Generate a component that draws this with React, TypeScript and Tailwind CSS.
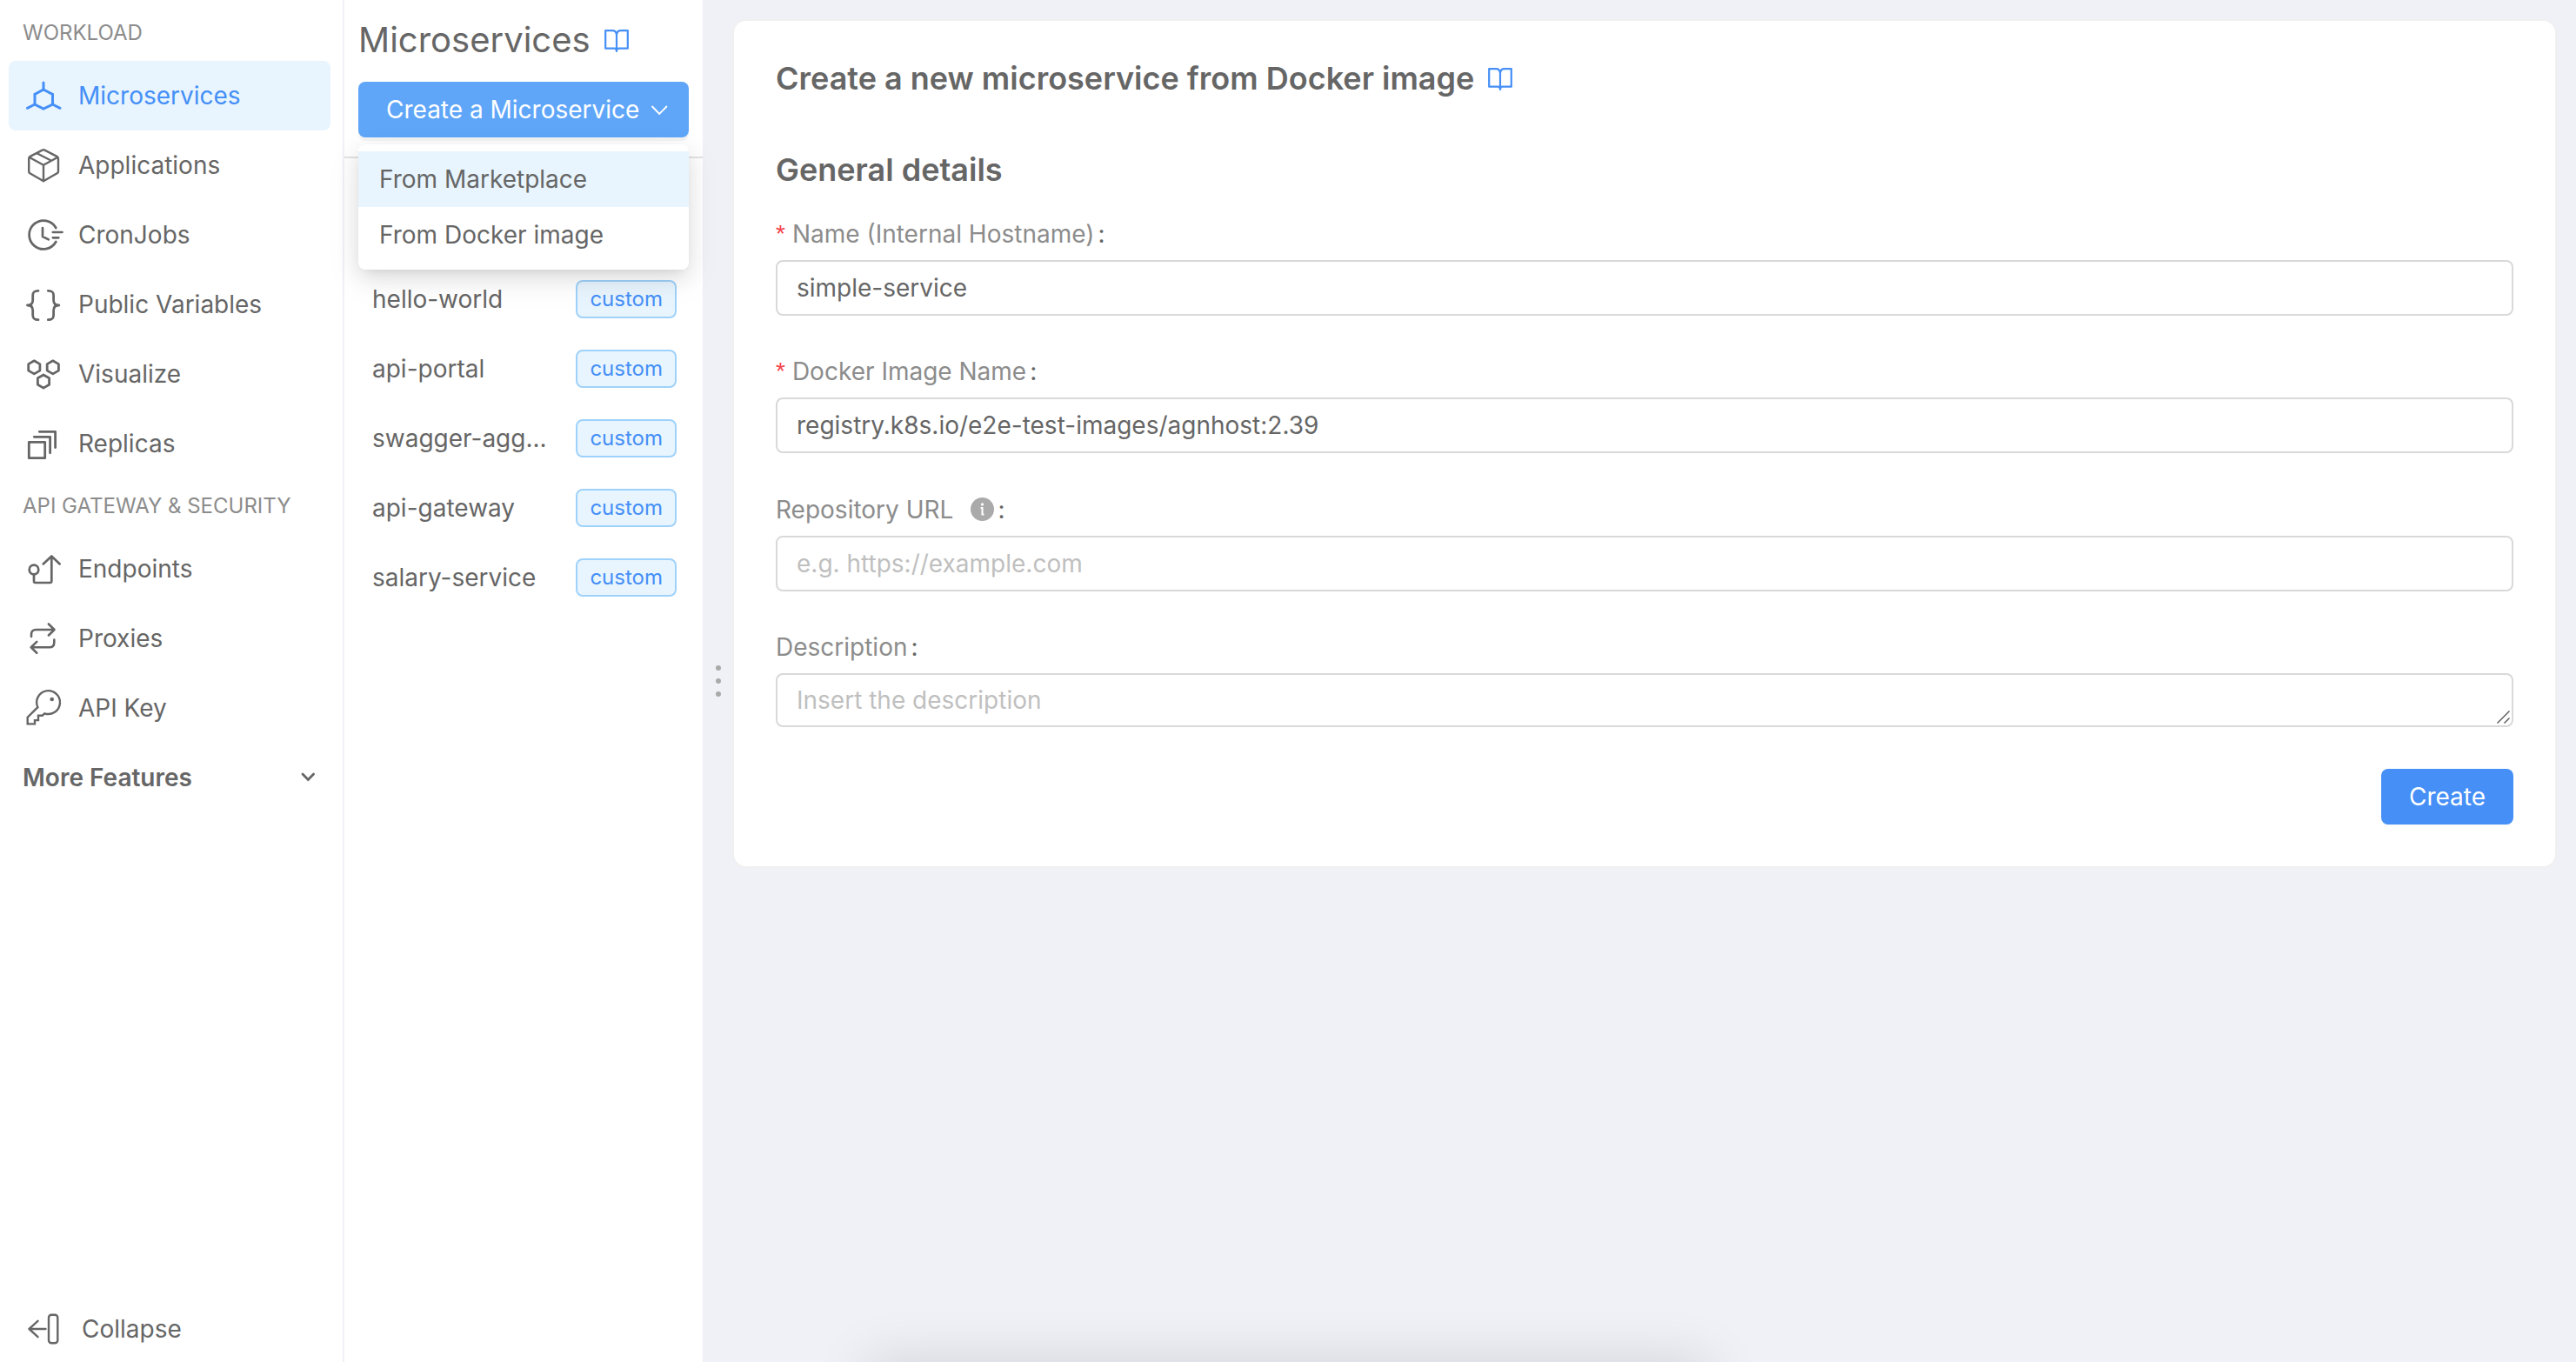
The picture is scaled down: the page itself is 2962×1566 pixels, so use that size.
import type { ReactNode } from "react";

function Icon({ children, width = 2.7 }: { children: ReactNode; width?: number }) {
  return (
    <svg
      className="size-12 shrink-0"
      viewBox="0 0 48 48"
      fill="none"
      stroke="currentColor"
      strokeWidth={width}
      strokeLinecap="round"
      strokeLinejoin="round"
      aria-hidden="true"
    >
      {children}
    </svg>
  );
}

const icons = {
  microservices: (
    <Icon width={3}>
      <path strokeLinejoin="miter" d="M24 17 34.5 22.5V34L24 39 14 34V22.5Z" />
      <path d="M24 9v8M14 34 5.5 38.3M34.5 34 43 38.3" />
    </Icon>
  ),
  applications: (
    <Icon width={2.4}>
      <path d="M22.6 6.6a3 3 0 0 1 2.8 0l14 7.3A3 3 0 0 1 41 16.500V31a2.500 2.500 0 0 1-1.400 2.300L24 42.200 8.400 33.300A2.500 2.500 0 0 1 7.200 31V16.500a3 3 0 0 1 1.500-2.600Z" />
      <path d="M8 15 24 23.700 40 15M24 23.700V42M17 10.500l15.500 8" />
    </Icon>
  ),
  cron: (
    <Icon>
      <path d="M38.300 16a16.400 16.400 0 1 0 0 16M23 16.200V26l6.800 3.400M34.800 21H45.500M34.800 27.300h6.500" />
    </Icon>
  ),
  variables: (
    <Icon width={2.8}>
      <path d="M18 8.300c-4.500 0-6.300 1.200-6.300 5.500v5.500c0 3.500-1.700 5.700-6.200 5.700 4.500 0 6.200 2.200 6.200 5.700v5.500c0 4.300 1.800 5.500 6.300 5.500" />
      <path d="M29.300 8.300c4.500 0 6.300 1.200 6.300 5.500v5.500c0 3.500 1.700 5.700 6.200 5.700-4.500 0-6.200 2.200-6.200 5.700v5.500c0 4.300-1.800 5.500-6.300 5.500" />
    </Icon>
  ),
  visualize: (
    <Icon width={2.8}>
      <path d="m13.300 8.800 6.600 3.800v7.500l-6.600 3.800-6.600-3.800v-7.500ZM34.800 8.800l6.600 3.800v7.500l-6.600 3.800-6.600-3.800v-7.500ZM24 25l6.600 3.800v7.500L24 40.100l-6.600-3.800v-7.500Z" />
    </Icon>
  ),
  replicas: (
    <Icon width={2.8}>
      <path d="M7.300 22.300h18.400v18.400H7.300ZM13.300 16.300h18.300v18.500M19.300 10.300h18.300v18.300" />
    </Icon>
  ),
  endpoints: (
    <Icon>
      <circle cx="13" cy="25" r="5.300" />
      <path d="M13 31v7.300q0 1.700 1.700 1.700h16.900q1.700 0 1.700-1.700V9.500M23.700 18.400l9.600-8.900 9.400 8.900" />
    </Icon>
  ),
  proxies: (
    <Icon width={2.6}>
      <path d="M10 22v-2.500q0-5.500 5.500-5.500h21M29.900 7.500l6.600 6.500-6.600 6.500M36.300 25.500v3.300q0 5.500-5.500 5.500H9.700M16.300 27.900l-6.600 6.400 6.600 6.500" />
    </Icon>
  ),
  key: (
    <Icon width={2.4}>
      <path
        strokeLinejoin="miter"
        d="M25.300 30.300a13.400 13.400 0 1 0-7.900-7.100L5.700 34.700v7.700H14v-4.300h4v-5.400h4.700Z"
      />
      <circle cx="33.700" cy="14" r="2.300" fill="currentColor" stroke="none" />
    </Icon>
  ),
  collapse: (
    <Icon width={2.4}>
      <path d="M26.500 24H7.500M17.500 14.800 7.500 24l10 9.200" />
      <rect x="30" y="7.700" width="10.300" height="32.600" rx="3.200" />
    </Icon>
  ),
};

function Book() {
  return (
    <svg
      className="size-7 shrink-0"
      viewBox="0 0 28 28"
      fill="none"
      stroke="currentColor"
      strokeWidth="2.200"
      strokeLinejoin="round"
      strokeLinecap="round"
      aria-hidden="true"
    >
      <path d="M14 26V7c-.3-3-2-4.900-4.700-4.900H1.200v20.600h10.300c1.600 0 2.500 1 2.500 3.300ZM14 26V7c.3-3 2-4.900 4.700-4.900h8.100v20.600H16.500c-1.600 0-2.500 1-2.500 3.300Z" />
    </svg>
  );
}

function NavItem({ icon, label, active }: { icon: ReactNode; label: string; active?: boolean }) {
  return (
    <a
      href="#"
      aria-current={active ? "page" : undefined}
      className={
        active
          ? "flex h-20 items-center gap-4 rounded-lg bg-[#e8f5fe] px-4 text-[#458ff7]"
          : "flex h-20 items-center gap-4 rounded-lg px-4"
      }
    >
      {icon}
      {label}
    </a>
  );
}

function Field({
  id,
  label,
  required,
  info,
  children,
}: {
  id: string;
  label: string;
  required?: boolean;
  info?: boolean;
  children: ReactNode;
}) {
  return (
    <div className="mb-[42px]">
      <label
        htmlFor={id}
        className={info ? "mb-2 flex h-[45px] items-center" : "mb-2 flex h-11 items-center"}
      >
        {required && <span className="mr-2 font-['Liberation_Sans',sans-serif] text-[#f5414a]">*</span>}
        <span className="text-[#8c8c8c]">{label}</span>
        {info && (
          <svg className="ml-5 size-[27px]" viewBox="0 0 28 28" role="img" aria-label="Info">
            <circle cx="14" cy="14" r="14" fill="#aaaaaa" />
            <circle cx="14" cy="8.200" r="1.700" fill="#fff" />
            <path d="M12 12.500h2v7.800h2" fill="none" stroke="#fff" strokeWidth="2.100" />
          </svg>
        )}
        <span className="ml-1">:</span>
      </label>
      {children}
    </div>
  );
}

const inputClass =
  "block h-16 w-full rounded-lg border-2 border-[#d9d9d9] bg-white px-[22px] text-[#666666] outline-none placeholder:text-[#bfbfbf]";

const services = ["hello-world", "api-portal", "swagger-agg...", "api-gateway", "salary-service"];

export default function App() {
  return (
    <div className="relative flex h-screen overflow-hidden bg-[#f0f1f6] font-['Inter',sans-serif] text-[28px] leading-[44px] text-[#666666]">
      <aside className="flex w-[396px] shrink-0 flex-col border-r-2 border-[#f0f1f6] bg-white pt-1.5 pr-3.5 pl-2.5">
        <nav aria-label="Main">
          <h2 className="flex h-16 items-center px-4 text-2xl text-[#8c8c8c]">WORKLOAD</h2>
          <NavItem icon={icons.microservices} label="Microservices" active />
          <NavItem icon={icons.applications} label="Applications" />
          <NavItem icon={icons.cron} label="CronJobs" />
          <NavItem icon={icons.variables} label="Public Variables" />
          <NavItem icon={icons.visualize} label="Visualize" />
          <NavItem icon={icons.replicas} label="Replicas" />
          <h2 className="flex h-16 items-center px-4 text-2xl text-[#8c8c8c]">API GATEWAY &amp; SECURITY</h2>
          <NavItem icon={icons.endpoints} label="Endpoints" />
          <NavItem icon={icons.proxies} label="Proxies" />
          <NavItem icon={icons.key} label="API Key" />
          <button type="button" className="flex h-20 w-full items-center justify-between px-4 font-semibold">
            More Features
            <svg className="size-5" viewBox="0 0 20 20" fill="none" stroke="currentColor" strokeWidth="2.800" strokeLinecap="round" aria-hidden="true">
              <path d="m4 6 6.300 6.500L16.600 6" />
            </svg>
          </button>
        </nav>
        <button type="button" className="mt-auto flex h-[76px] w-full items-center gap-5 px-4">
          {icons.collapse}
          Collapse
        </button>
      </aside>

      <section className="flex w-[412px] shrink-0 flex-col bg-white">
        <header className="border-b-2 border-[#e3e3e3] px-4 pt-4 pb-[22px]">
          <h1 className="mb-[18px] flex h-[60px] items-center gap-4 text-[40px]">
            Microservices
            <a href="#" aria-label="Microservices documentation" className="pt-0.5 text-[#458ff7]">
              <Book />
            </a>
          </h1>
          <div className="relative z-10">
            <button
              type="button"
              aria-haspopup="menu"
              aria-expanded="true"
              className="flex h-16 w-full items-center rounded-lg bg-[#5fa6f9] pr-6 pl-8 text-white shadow-[0_4px_0_rgba(0,0,0,0.04)]"
            >
              Create a Microservice
              <svg className="ml-auto size-5" viewBox="0 0 20 20" fill="none" stroke="currentColor" strokeWidth="1.900" aria-hidden="true">
                <path d="m1.500 6 8.700 9L18.900 6" />
              </svg>
            </button>
            <div
              role="menu"
              className="absolute top-full right-0 left-0 mt-2 rounded-lg bg-white py-2 shadow-[0_6px_12px_-8px_rgba(0,0,0,0.12),0_8px_24px_rgba(0,0,0,0.1),0_12px_40px_4px_rgba(0,0,0,0.05)]"
            >
              <button type="button" role="menuitem" className="flex h-16 w-full items-center bg-[#e8f5fe] px-6">
                From Marketplace
              </button>
              <button type="button" role="menuitem" className="flex h-16 w-full items-center px-6">
                From Docker image
              </button>
            </div>
          </div>
        </header>
        <ul className="pt-[122px]">
          {services.map((name) => (
            <li key={name}>
              <a href="#" className="flex h-20 items-center justify-between pr-[30px] pl-8">
                <span>{name}</span>
                <span className="flex h-11 items-center rounded-lg border-2 border-[#9fd2fa] bg-[#e8f5fe] px-3.5 text-2xl text-[#458ff7]">
                  custom
                </span>
              </a>
            </li>
          ))}
        </ul>
      </section>

      <div className="flex w-[34px] shrink-0 flex-col items-center justify-center gap-[9px] pl-0.5" role="separator" aria-orientation="vertical">
        <span className="size-1.5 rounded-full bg-[#aaaaaa]" />
        <span className="size-1.5 rounded-full bg-[#aaaaaa]" />
        <span className="size-1.5 rounded-full bg-[#aaaaaa]" />
      </div>

      <main className="min-w-0 flex-1 pt-[22px] pr-[22px]">
        <form
          className="rounded-2xl border-2 border-[#f0f0f0] bg-white px-12 pt-[46px] pb-12"
          onSubmit={(e) => e.preventDefault()}
        >
          <h2 className="flex h-10 items-center gap-4 text-4xl font-semibold">
            Create a new microservice from Docker image
            <a href="#" aria-label="Docker image documentation" className="pt-0.5 text-[#458ff7]">
              <Book />
            </a>
          </h2>
          <h3 className="mt-[65px] mb-8 flex h-10 items-center text-4xl font-semibold">General details</h3>
          <Field id="name" label="Name (Internal Hostname)" required>
            <input id="name" type="text" required defaultValue="simple-service" className={inputClass} />
          </Field>
          <Field id="image" label="Docker Image Name" required>
            <input
              id="image"
              type="text"
              required
              defaultValue="registry.k8s.io/e2e-test-images/agnhost:2.39"
              className={inputClass}
            />
          </Field>
          <Field id="repository" label="Repository URL" info>
            <input id="repository" type="text" placeholder="e.g. https://example.com" className={inputClass} />
          </Field>
          <Field id="description" label="Description">
            <div className="relative">
              <textarea
                id="description"
                rows={1}
                placeholder="Insert the description"
                className="block h-[62px] w-full resize-none overflow-hidden rounded-lg border-2 border-[#d9d9d9] bg-white px-[22px] py-[7px] outline-none placeholder:text-[#bfbfbf]"
              />
              <svg className="absolute right-1 bottom-1 size-4" viewBox="0 0 16 16" stroke="#555555" strokeWidth="1.400" aria-hidden="true">
                <path d="M1.500 15.500 15.500 1.500M9.500 15.500l6-6" />
              </svg>
            </div>
          </Field>
          <div className="mt-12 flex justify-end">
            <button
              type="submit"
              className="h-16 rounded-lg bg-[#458ff7] px-8 text-white shadow-[0_2px_0_rgba(0,0,0,0.02)]"
            >
              Create
            </button>
          </div>
        </form>
      </main>

      <div
        aria-hidden="true"
        className="pointer-events-none absolute top-full left-1/2 h-16 w-[970px] -translate-x-1/2 rounded-lg shadow-[0_0_64px_rgba(0,0,0,0.13)]"
      />
    </div>
  );
}
